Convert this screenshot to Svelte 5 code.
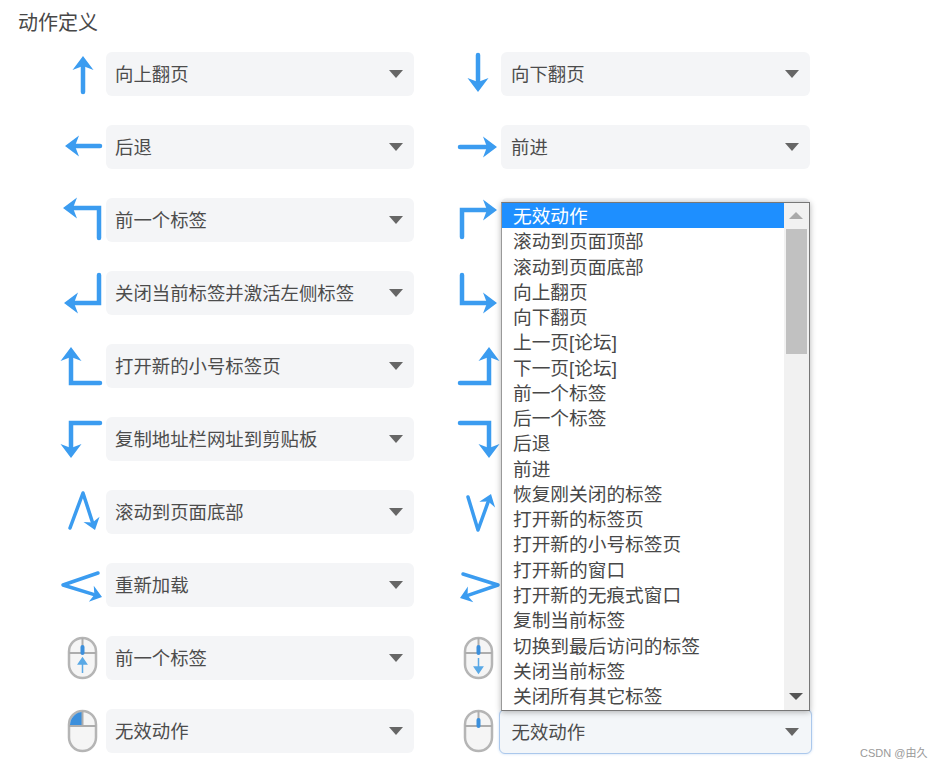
<script>
  const left = [
    { label: '向上翻页', line: [[23, 40], [23, 4]] },
    { label: '后退', line: [[40, 21], [5, 21]] },
    { label: '前一个标签', line: [[39, 40], [39, 10], [3, 10]] },
    { label: '关闭当前标签并激活左侧标签', line: [[39, 4], [39, 32], [4, 32]] },
    { label: '打开新的小号标签页', line: [[40, 39], [11, 39], [11, 3]] },
    { label: '复制地址栏网址到剪贴板', line: [[40, 6], [11, 6], [11, 41]] },
    { label: '滚动到页面底部', line: [[10, 38], [23, 3], [35, 40]], slim: true },
    { label: '重新加载', line: [[38, 10], [3, 22], [42, 34]], slim: true },
    { label: '前一个标签', mouse: 'up', mx: 8 },
    { label: '无效动作', mouse: 'left', mx: 8 }
  ];

  // rows 3 to 9 sit under the open list, so they show no label
  const right = [
    { label: '向下翻页', line: [[23, 3], [23, 40]] },
    { label: '前进', line: [[5, 22], [42, 22]] },
    { label: '', line: [[7, 39], [7, 12], [42, 12]], open: true },
    { label: '', line: [[7, 4], [7, 32], [42, 32]] },
    { label: '', line: [[5, 39], [34, 39], [34, 3]] },
    { label: '', line: [[5, 6], [34, 6], [34, 41]] },
    { label: '', line: [[13, 7], [23, 40], [36, 4]], slim: true },
    { label: '', line: [[8, 11], [43, 22], [5, 35]], slim: true },
    { label: '', mouse: 'down', mx: 9 },
    { label: '无效动作', mouse: 'none', mx: 9, focused: true }
  ];

  const options = [
    '无效动作', '滚动到页面顶部', '滚动到页面底部', '向上翻页', '向下翻页',
    '上一页[论坛]', '下一页[论坛]', '前一个标签', '后一个标签', '后退', '前进',
    '恢复刚关闭的标签', '打开新的标签页', '打开新的小号标签页', '打开新的窗口',
    '打开新的无痕式窗口', '复制当前标签', '切换到最后访问的标签', '关闭当前标签', '关闭所有其它标签'
  ];

  function lastDir(line) {
    const [x2, y2] = line[line.length - 1];
    const [x1, y1] = line[line.length - 2];
    const d = Math.hypot(x2 - x1, y2 - y1);
    return { x2, y2, ux: (x2 - x1) / d, uy: (y2 - y1) / d };
  }

  // shaft stops inside the head so its cap doesn't poke through the tip
  function shaft(line) {
    const { x2, y2, ux, uy } = lastDir(line);
    const pts = [...line.slice(0, -1), [x2 - ux * 9, y2 - uy * 9]];
    return pts.map((p) => p.join(',')).join(' ');
  }

  function head(row) {
    const { x2, y2, ux, uy } = lastDir(row.line);
    const s = row.slim ? 0.8 : 1;
    const at = (back, side) => `${x2 - ux * back * s - uy * side * s},${y2 - uy * back * s + ux * side * s}`;
    return [at(0, 0), at(14, 10.5), at(10, 0), at(14, -10.5)].join(' ');
  }
</script>

{#snippet icon(row)}
  <svg class="icon" width="40" height="44" viewBox="0 0 40 44">
    {#if row.mouse}
      <g transform="translate({row.mx} 1)">
        <rect class="body" x="1" y="1" width="27" height="40" rx="13.5" />
        {#if row.mouse === 'left'}
          <path class="blue" d="M14.5 2 A13 13 0 0 0 2 15 V16 H14.5 Z" />
        {/if}
        <path class="seam" d="M1 16 H28 M14.5 1 V16" />
        {#if row.mouse !== 'left'}
          <rect class="blue" x="12.5" y="8" width="4" height="10" rx="2" />
        {/if}
        {#if row.mouse === 'up'}
          <path class="thin" d="M14.5 36 V23 M10.5 27 L14.5 21 L18.5 27 Z" />
        {:else if row.mouse === 'down'}
          <path class="thin" d="M14.5 21 V34 M10.5 30 L14.5 36 L18.5 30 Z" />
        {/if}
      </g>
    {:else}
      <polyline class="stroke" class:slim={row.slim} points={shaft(row.line)} />
      <polygon class="tip" points={head(row)} />
    {/if}
  </svg>
{/snippet}

{#snippet action(row)}
  <div class="row">
    {@render icon(row)}
    <div class="select" class:focused={row.focused}>
      <span>{row.label}</span>
      <i class="caret"></i>
      {#if row.open}
        <div class="dropdown">
          <ul>
            {#each options as option, i}
              <li class:active={i === 0}>{option}</li>
            {/each}
          </ul>
          <div class="scrollbar">
            <i class="up"></i>
            <div class="thumb"></div>
            <i class="down"></i>
          </div>
        </div>
      {/if}
    </div>
  </div>
{/snippet}

<main class="page">
  <h3>动作定义</h3>
  <div class="grid">
    {#each left as row, i}
      {@render action(row)}
      {@render action(right[i])}
    {/each}
  </div>
  <footer>CSDN @由久</footer>
</main>

<style>
  :global(body) {
    background: #fff;
  }

  .page {
    position: relative;
    width: 942px;
    height: 768px;
    overflow: hidden;
    padding: 10px 0 0 18px;
    box-sizing: border-box;
    font-family: "Liberation Sans", "Noto Sans CJK SC", sans-serif;
    color: #4c4c4c;
  }

  h3 {
    margin: 0;
    font-size: 20px;
    font-weight: 400;
    line-height: 26px;
    color: #484848;
  }

  .grid {
    display: grid;
    grid-template-columns: 354px 355px;
    column-gap: 41px;
    row-gap: 29px;
    margin: 16px 0 0 42px;
  }

  .row {
    display: flex;
    gap: 6px;
    height: 44px;
  }

  .icon {
    flex: none;
    overflow: visible;
  }

  .stroke {
    fill: none;
    stroke: #3b9cf0;
    stroke-width: 4.5;
    stroke-linecap: round;
    stroke-miterlimit: 2;
  }

  .stroke.slim {
    stroke-width: 3.5;
    stroke-linejoin: round;
  }

  .tip {
    fill: #3b9cf0;
  }

  .body {
    fill: #f5f5f5;
    stroke: #b5b5b5;
    stroke-width: 2.5;
  }

  .seam {
    fill: none;
    stroke: #adadad;
    stroke-width: 2;
  }

  .blue {
    fill: #3b8fdc;
  }

  .thin {
    fill: #5aa9e6;
    stroke: #5aa9e6;
    stroke-width: 1.5;
  }

  .select {
    position: relative;
    flex: 1;
    display: flex;
    align-items: center;
    justify-content: space-between;
    padding: 0 11px 0 9px;
    background: #f4f5f7;
    border-radius: 6px;
    font-size: 18.4px;
  }

  .select span {
    margin-bottom: 2px;
  }

  .row:nth-child(even) .select {
    padding-left: 10px;
  }

  .row:nth-child(even) .select.focused {
    margin: 0 -2px -1px;
    padding: 0 12px 0 11.5px;
    border: 1.5px solid #abc8ec;
    box-shadow: 0 0 3px #c9dcf3;
    background: #f3f6f9;
  }

  .caret {
    width: 0;
    height: 0;
    border-style: solid;
    border-width: 8px 7.5px 0;
    border-color: #666 transparent transparent;
  }

  .dropdown {
    position: absolute;
    top: 4px;
    left: 0;
    z-index: 2;
    display: flex;
    width: 309px;
    height: 509px;
    box-sizing: border-box;
    background: #fff;
    border: 1px solid #777;
    border-left-color: #999;
    box-shadow: 0 1px 6px rgba(0, 0, 0, 0.3);
    font-size: 18.7px;
    color: #484848;
  }

  ul {
    flex: 1;
    margin: 0;
    padding: 0;
    list-style: none;
  }

  li {
    height: 25.28px;
    line-height: 27.28px;
    padding-left: 11px;
    white-space: nowrap;
  }

  li.active {
    background: #1e8fff;
    color: #fff;
  }

  .scrollbar {
    position: relative;
    flex: none;
    width: 25px;
    background: #f1f1f1;
  }

  .thumb {
    position: absolute;
    top: 26px;
    left: 2px;
    width: 21px;
    height: 125px;
    background: #c1c1c1;
  }

  .up,
  .down {
    position: absolute;
    left: 5px;
    width: 0;
    height: 0;
    border-style: solid;
    border-color: transparent;
  }

  .up {
    top: 9px;
    border-width: 0 7px 7px;
    border-bottom-color: #a9a9a9;
  }

  .down {
    bottom: 10px;
    border-width: 7px 7px 0;
    border-top-color: #555;
  }

  footer {
    position: absolute;
    top: 745px;
    left: 860px;
    font-size: 11px;
    line-height: 16px;
    color: #999;
    white-space: nowrap;
  }
</style>
